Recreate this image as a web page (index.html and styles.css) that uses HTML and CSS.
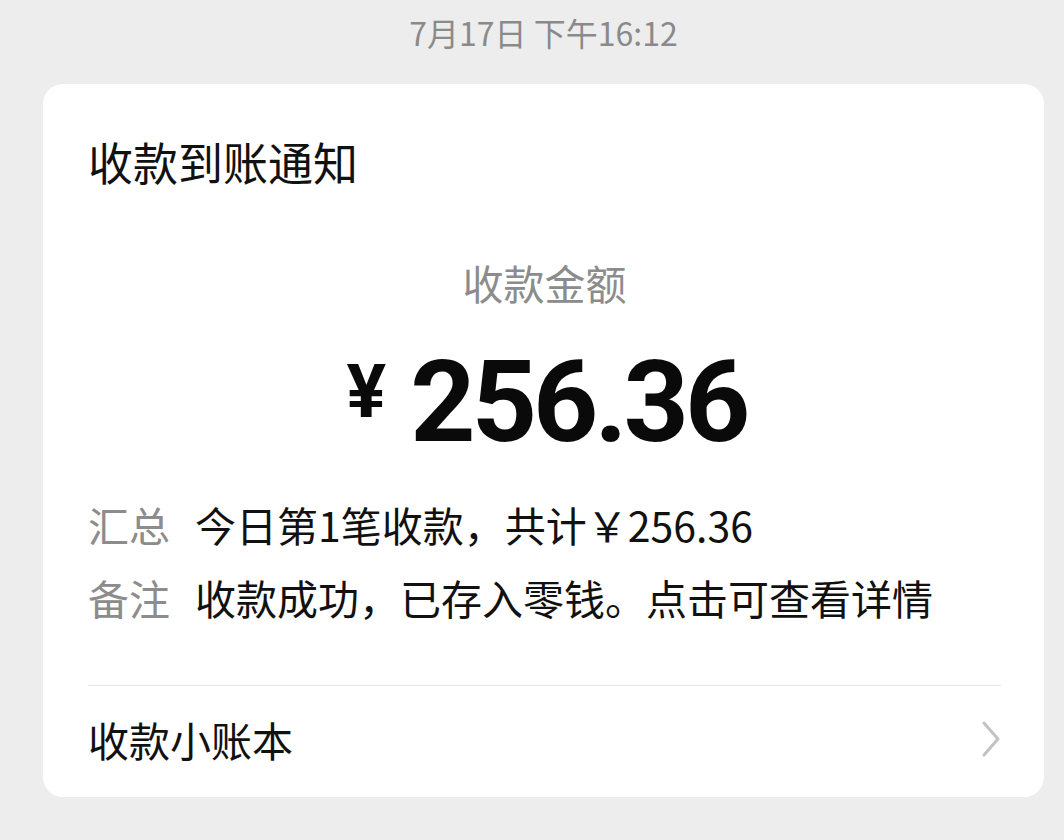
FILE: index.html
```html
<!DOCTYPE html>
<html lang="zh-CN">
<head>
<meta charset="utf-8">
<link rel="stylesheet" href="styles.css">
</head>
<body>
<div class="page">
  <div class="time">7月17日 下午16:12</div>
  <div class="card">
    <div class="title">收款到账通知</div>
    <div class="label">收款金额</div>
    <div class="amount"><span class="yen">¥</span><span class="num">256.36</span></div>
    <div class="rows">
      <div class="row"><span class="key">汇总</span><span class="val">今日第1笔收款，共计￥256.36</span></div>
      <div class="row"><span class="key">备注</span><span class="val">收款成功，已存入零钱。点击可查看详情</span></div>
    </div>
    <div class="divider"></div>
    <div class="footer">
      <span class="ftext">收款小账本</span>
      <svg class="chev" width="20" height="36" viewBox="0 0 20 36"><path d="M3 2 L17 18 L3 34" fill="none" stroke="#c2c2c2" stroke-width="3" stroke-linecap="round" stroke-linejoin="round"/></svg>
    </div>
  </div>
</div>
</body>
</html>
```

FILE: styles.css
```css
html, body {
  margin: 0;
  padding: 0;
  background: #ededed;
}
body {
  width: 1064px;
  height: 840px;
  overflow: hidden;
  font-family: "Noto Sans CJK SC", "Noto Sans", sans-serif;
}
.page {
  width: 1001px;
  padding-left: 43px;
  display: flex;
  flex-direction: column;
}
.time {
  height: 84px;
  padding-top: 12px;
  box-sizing: border-box;
  text-align: center;
  font-size: 32px;
  line-height: 40px;
  color: #8a8a8a;
}
.card {
  background: #fff;
  border-radius: 20px;
  padding: 0 43px 0 45px;
  display: flex;
  flex-direction: column;
}
.title {
  margin-top: 48px;
  font-size: 45px;
  line-height: 60px;
  color: #111;
}
.label {
  margin-top: 62px;
  text-align: center;
  font-size: 41px;
  line-height: 56px;
  color: #8c8c8c;
}
.amount {
  margin-top: 35px;
  display: flex;
  justify-content: center;
  align-items: flex-start;
  color: #0a0a0a;
  font-family: "Roboto", "Noto Sans", sans-serif;
  font-weight: 700;
  line-height: 1;
  white-space: nowrap;
}
.yen {
  font-size: 74px;
  margin: 10px 24px 0 0;
}
.num {
  font-size: 114px;
  letter-spacing: -4px;
  margin-right: -4px;
}
.rows {
  margin-top: 37px;
  display: flex;
  flex-direction: column;
  gap: 17px;
}
.row {
  display: flex;
  font-size: 41px;
  line-height: 56px;
}
.key {
  color: #8c8c8c;
  width: 107px;
  flex: none;
}
.val {
  color: #111;
}
.divider {
  margin-top: 60px;
  height: 1px;
  background: #e6e6e6;
}
.footer {
  height: 111px;
  padding-bottom: 6px;
  box-sizing: border-box;
  display: flex;
  align-items: center;
  justify-content: space-between;
}
.ftext {
  font-size: 41px;
  line-height: 56px;
  color: #111;
}
.chev {
  display: block;
}
```
